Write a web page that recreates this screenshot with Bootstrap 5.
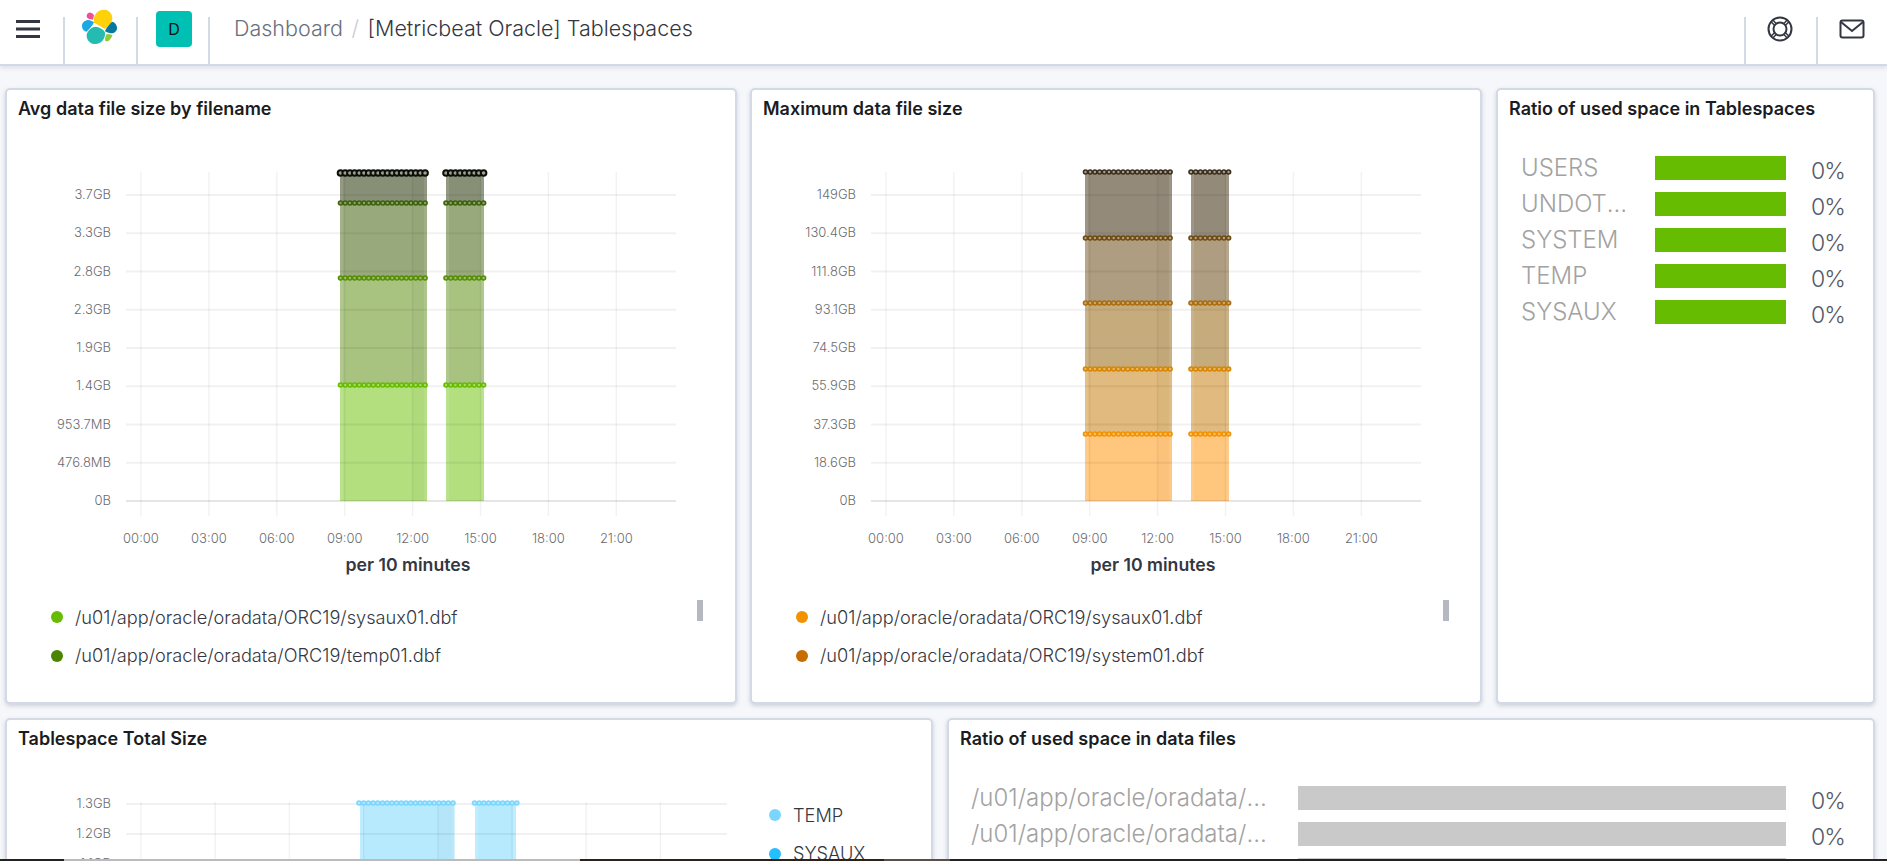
<!DOCTYPE html>
<html lang="en">

<head>
    <meta charset="UTF-8" />
    <meta name="viewport" content="width=device-width, initial-scale=1" />
    <title>[Metricbeat Oracle] Tablespaces</title>
    <link href="https://cdn.jsdelivr.net/npm/bootstrap@5.3.3/dist/css/bootstrap.min.css" rel="stylesheet">
    <style>
        html, body { height: 100%; overflow: hidden; }
        body { font-family: Inter, "Noto Sans", sans-serif; background: #f5f7fa; color: #343741; }

        .top-bar { height: 66px; background: #fff; border-bottom: 2px solid #d3dae6; box-shadow: 0 2px 4px rgba(152, 162, 179, .25); flex-wrap: nowrap; }
        .bar-cell { position: relative; height: 64px; padding-bottom: 7px; }
        .bar-cell.line-right::after, .bar-cell.line-left::before { content: ""; position: absolute; top: 17px; bottom: 0; width: 2px; background: #d3dae6; }
        .bar-cell.line-right::after { right: 0; }
        .bar-cell.line-left::before { left: 0; }
        .cell-menu { width: 65px; }
        .cell-logo { width: 73px; }
        .cell-space { width: 72px; }
        .cell-help { width: 72px; }
        .cell-mail { width: 71px; }
        .logo-mark { margin-left: 19px; }
        .space-tile { width: 36px; height: 36px; margin-left: 18px; background: #00bfb3; color: #111; border-radius: 4px; font-size: 16px; }
        .crumbs { padding-left: 24px; font-size: 21.500px; font-weight: 300; padding-bottom: 7px; --bs-breadcrumb-divider-color: #c5ccd9; --bs-breadcrumb-item-padding-x: 8.500px; }
        .crumbs .breadcrumb-item { color: #69707d; }
        .crumbs .breadcrumb-item.active { color: #343741; }

        .dash { padding: 22px 12px 0 5px; gap: 14px; }
        .row-top { display: grid; grid-template-columns: 732fr 731fr 379fr; gap: 14px; }
        .row-bottom { display: grid; grid-template-columns: 1fr 1fr; gap: 14px; }
        .panel { --bs-card-border-color: #d3dae6; --bs-card-border-width: 2px; --bs-card-border-radius: 5px; box-shadow: 0 2px 4px rgba(152, 162, 179, .45); overflow: hidden; }
        .panel-shift { margin-left: -1px; }
        .row-top .panel { height: 616px; }
        .row-bottom .panel { height: 300px; }
        .panel-head { height: 37px; line-height: 37px; padding-left: 11px; font-size: 18px; font-weight: 600; color: #1a1c21; white-space: nowrap; }
        .panel svg { display: block; flex: none; }
        .panel svg text { font-family: Inter, "Noto Sans", sans-serif; }

        .legend-box { position: relative; padding: 1px 0 0 44px; }
        .legend-line { height: 38.500px; gap: 12px; font-size: 18.200px; font-weight: 300; color: #343741; white-space: nowrap; }
        .legend-dot { width: 12px; height: 12px; border-radius: 50%; flex: none; }
        .legend-thumb { position: absolute; top: 3px; right: 32px; width: 6px; height: 21px; background: #b5b8c0; }
        .panel-shift .legend-thumb { right: 31px; }
        .side-legend { padding: 39px 0 0 1px; }

        .ratio-list { margin-top: 23px; padding-left: 23px; }
        .ratio-list.wide { padding-left: 22px; }
        .ratio-line { height: 36px; font-weight: 300; font-size: 24px; }
        .ratio-name { width: 134px; padding-right: 23px; color: #a3a2a2; line-height: 34px; margin-top: -1px; flex: none; }
        .wide .ratio-name { width: 327px; padding-right: 19px; }
        .ratio-fill { height: 24px; flex-grow: 1; }
        .ratio-pct { width: 87px; padding-left: 25px; padding-top: 6px; color: #555a66; font-size: 23px; letter-spacing: -1px; flex: none; white-space: nowrap; }

        .task-strip { height: 2px; }
    </style>
</head>

<body>
    <nav class="navbar top-bar p-0 justify-content-start">
        <div class="bar-cell line-right cell-menu d-flex align-items-center">
            <svg class="ms-3" width="24" height="18" viewBox="0 0 24 18"><path d="M0 1.500h24M0 9h24M0 16.500h24" stroke="#343741" stroke-width="3" fill="none" /></svg>
        </div>
        <div class="bar-cell line-right cell-logo d-flex align-items-center">
            <svg class="logo-mark" width="42" height="42" viewBox="42 22 126 126" overflow="visible">
                <path d="M72 52C74 36 90 26 104 27C118 28 128 40 127 54C126 66 112 78 105 85C95 78 82 72 72 66Z" fill="#fed10a" />
                <path d="M50 46C50 40 56 35 62 36C67 37 71 41 72 44C71 48 70 53 69 57C60 57 50 54 50 46Z" fill="#f04e98" />
                <path d="M36 75C36 65 46 58 55 58C62 59 68 62 72 65C68 74 58 86 50 93C42 92 36 85 36 75Z" fill="#1ba9e1" />
                <path d="M50 102C52 90 66 78 76 78C90 80 103 88 105 96C107 112 94 130 76 130C60 130 49 118 50 102Z" fill="#24bbb1" />
                <path d="M105 92C108 82 120 68 126 63C135 64 141 74 141 82C141 92 132 99 122 98C116 97 110 95 105 92Z" fill="#0779a1" />
                <path d="M105 118C105 112 107 105 110 100C116 100 122 101 127 103C125 112 118 122 111 122C107 122 105 121 105 118Z" fill="#93c83e" />
            </svg>
        </div>
        <div class="bar-cell line-right cell-space d-flex align-items-center">
            <div class="space-tile d-flex align-items-center justify-content-center">D</div>
        </div>
        <ol class="breadcrumb crumbs mb-0 flex-grow-1">
            <li class="breadcrumb-item">Dashboard</li>
            <li class="breadcrumb-item active">[Metricbeat Oracle] Tablespaces</li>
        </ol>
        <div class="bar-cell line-left cell-help d-flex align-items-center justify-content-center">
            <svg width="26" height="26" viewBox="0 0 26 26" fill="none" stroke="#343741" stroke-width="2">
                <circle cx="13" cy="13" r="11.500" />
                <circle cx="13" cy="13" r="6.500" />
                <path d="M5.500 3.800 9.200 7.500M3.800 5.500 7.500 9.200M20.500 3.800 16.800 7.500M22.200 5.500 18.500 9.200M5.500 22.200 9.200 18.500M3.800 20.500 7.500 16.800M20.500 22.200 16.800 18.500M22.200 20.500 18.500 16.800" stroke-width="1.500" />
            </svg>
        </div>
        <div class="bar-cell line-left cell-mail d-flex align-items-center justify-content-center">
            <svg width="26" height="20" viewBox="0 0 26 20" fill="none" stroke="#343741" stroke-width="2">
                <rect x="1.500" y="1.500" width="23" height="17" rx="2" />
                <path d="M2 3l11 9 11-9" />
            </svg>
        </div>
    </nav>

    <main class="dash d-flex flex-column">
        <div class="row-top">
            <div class="card panel">
                <div class="panel-head">Avg data file size by filename</div>
                <svg id="chart-avg" width="728" height="470" viewBox="7 127 728 470"></svg>
                <div class="legend-box">
                    <div class="legend-line d-flex align-items-center"><span class="legend-dot" style="background:#65bc00"></span>/u01/app/oracle/oradata/ORC19/sysaux01.dbf</div>
                    <div class="legend-line d-flex align-items-center"><span class="legend-dot" style="background:#4a8500"></span>/u01/app/oracle/oradata/ORC19/temp01.dbf</div>
                    <div class="legend-thumb"></div>
                </div>
            </div>
            <div class="card panel panel-shift">
                <div class="panel-head">Maximum data file size</div>
                <svg id="chart-max" width="728" height="470" viewBox="7 127 728 470"></svg>
                <div class="legend-box">
                    <div class="legend-line d-flex align-items-center"><span class="legend-dot" style="background:#f39200"></span>/u01/app/oracle/oradata/ORC19/sysaux01.dbf</div>
                    <div class="legend-line d-flex align-items-center"><span class="legend-dot" style="background:#c66c00"></span>/u01/app/oracle/oradata/ORC19/system01.dbf</div>
                    <div class="legend-thumb"></div>
                </div>
            </div>
            <div class="card panel">
                <div class="panel-head">Ratio of used space in Tablespaces</div>
                <div class="ratio-list" id="ratio-spaces"></div>
            </div>
        </div>
        <div class="row-bottom">
            <div class="card panel">
                <div class="panel-head">Tablespace Total Size</div>
                <div class="d-flex">
                    <svg id="chart-total" width="761" height="120" viewBox="7 757 761 120"></svg>
                    <div class="side-legend">
                        <div class="legend-line d-flex align-items-center"><span class="legend-dot" style="background:#7bd6ff"></span>TEMP</div>
                        <div class="legend-line d-flex align-items-center"><span class="legend-dot" style="background:#23bfff"></span>SYSAUX</div>
                    </div>
                </div>
            </div>
            <div class="card panel">
                <div class="panel-head">Ratio of used space in data files</div>
                <div class="ratio-list wide" id="ratio-files"></div>
            </div>
        </div>
    </main>

    <div class="task-strip d-flex position-fixed bottom-0 start-0 end-0" id="strip"></div>

    <script src="https://cdn.jsdelivr.net/npm/bootstrap@5.3.3/dist/js/bootstrap.bundle.min.js"></script>
    <script>
        const hours = ["00:00", "03:00", "06:00", "09:00", "12:00", "15:00", "18:00", "21:00"];

        function dotRow(from, to, y, stroke, fill, r, width) {
            let out = "";
            for (let x = from; x <= to; x += 4.7) {
                out += `<circle cx="${x}" cy="${y}" r="${r}" fill="${fill}" stroke="${stroke}" stroke-width="${width}"/>`;
            }
            return out;
        }

        // cfg.layers: top y of every stacked band, from the top one down
        function drawChart(id, cfg) {
            let out = "";
            cfg.bars.forEach(bar => {
                cfg.layers.forEach((layer, i) => {
                    const next = i + 1 < cfg.layers.length ? cfg.layers[i + 1].y : cfg.base;
                    out += `<rect x="${bar.x}" y="${layer.y}" width="${bar.w}" height="${next - layer.y}" fill="${layer.fill}"/>`;
                });
                if (bar.band) {
                    out += `<rect x="${bar.band}" y="${cfg.layers[0].y}" width="${bar.x + bar.w - bar.band}" height="${cfg.base - cfg.layers[0].y}" fill="rgba(0,0,0,.02)"/>`;
                }
                out += `<rect x="${bar.x}" y="${cfg.layers[0].y}" width="3" height="${cfg.base - cfg.layers[0].y}" fill="rgba(255,255,255,.1)"/>`;
                out += `<rect x="${bar.x + bar.w - 3}" y="${cfg.layers[0].y}" width="3" height="${cfg.base - cfg.layers[0].y}" fill="rgba(255,255,255,.1)"/>`;
            });
            cfg.ticks.forEach(t => {
                out += `<line x1="126" x2="${cfg.right}" y1="${t.y}" y2="${t.y}" stroke="rgba(0,0,0,${t.axis ? .1 : .055})" stroke-width="2"/>`;
                out += `<text x="111" y="${t.y + 4}" text-anchor="end" font-size="13" font-weight="300" fill="#6a6c70">${t.label}</text>`;
            });
            for (let i = 0; i < 8; i++) {
                const x = 141 + cfg.step * i;
                out += `<line x1="${x}" x2="${x}" y1="${cfg.top}" y2="${cfg.bottom}" stroke="rgba(0,0,0,.05)" stroke-width="1.500"/>`;
                if (cfg.axisLabels) {
                    out += `<text x="${x}" y="543" text-anchor="middle" font-size="13" font-weight="300" fill="#6a6c70">${hours[i]}</text>`;
                }
            }
            if (cfg.axisLabels) {
                out += `<text x="408" y="571" text-anchor="middle" font-size="17.700" font-weight="600" fill="#343741">per 10 minutes</text>`;
            }
            cfg.bars.forEach(bar => {
                cfg.layers.forEach(layer => {
                    out += dotRow(bar.dotFrom, bar.dotTo, layer.y, layer.dot, layer.dotFill, layer.r || 2, layer.width || 1.6);
                });
            });
            document.getElementById(id).innerHTML = out;
        }

        function gridTicks(labels) {
            return labels.map((label, i) => ({ label, y: 195 + 38.25 * i, axis: i === labels.length - 1 }));
        }

        drawChart("chart-avg", {
            top: 172, bottom: 516, base: 501, right: 676, step: 67.9, axisLabels: true,
            ticks: gridTicks(["3.7GB", "3.3GB", "2.8GB", "2.3GB", "1.9GB", "1.4GB", "953.7MB", "476.8MB", "0B"]),
            bars: [{ x: 340, w: 87, band: 412.500, dotFrom: 340.500, dotTo: 429 }, { x: 446, w: 38, dotFrom: 446, dotTo: 486 }],
            layers: [
                { y: 173, fill: "#878f76", dot: "#0c0f08", dotFill: "#9da093", r: 2.800, width: 2 },
                { y: 203, fill: "#98aa7b", dot: "#3d6208", dotFill: "#8ba170" },
                { y: 278, fill: "#a8c280", dot: "#568f03", dotFill: "#9dbb70" },
                { y: 385, fill: "#b3df7f", dot: "#65bc00", dotFill: "#aada66" }
            ]
        });

        // same page coordinates as the first chart, shifted by the grid
        drawChart("chart-max", {
            top: 172, bottom: 516, base: 501, right: 676, step: 67.9, axisLabels: true,
            ticks: gridTicks(["149GB", "130.4GB", "111.8GB", "93.1GB", "74.5GB", "55.9GB", "37.3GB", "18.6GB", "0B"]),
            bars: [{ x: 340, w: 87, band: 412.500, dotFrom: 340.500, dotTo: 429 }, { x: 446, w: 38, dotFrom: 446, dotTo: 486 }],
            layers: [
                { y: 172, fill: "#938a7a", dot: "#3a2e1e", dotFill: "#a89f8e" },
                { y: 238, fill: "#ae9d80", dot: "#6f4b14", dotFill: "#b39f80" },
                { y: 303, fill: "#c6ab7c", dot: "#ab6c10", dotFill: "#cba96c" },
                { y: 369, fill: "#e0ba7e", dot: "#d88600", dotFill: "#e6b76a" },
                { y: 434, fill: "#ffc67d", dot: "#f39200", dotFill: "#fdc068" }
            ]
        });

        drawChart("chart-total", {
            top: 802, bottom: 880, base: 880, right: 727, step: 74.200, axisLabels: false,
            ticks: [{ label: "1.3GB", y: 804 }, { label: "1.2GB", y: 834 }, { label: "1.1GB", y: 864 }],
            bars: [{ x: 360, w: 94.500, band: 438, dotFrom: 359, dotTo: 457 }, { x: 475, w: 41, dotFrom: 474.500, dotTo: 520 }],
            layers: [{ y: 803, fill: "#b8eafe", dot: "#7bd6ff", dotFill: "#b5e8fd" }]
        });

        function fillRatios(id, names, colour) {
            document.getElementById(id).innerHTML = names.map(name => `
                <div class="ratio-line d-flex align-items-center">
                    <div class="ratio-name text-truncate">${name}</div>
                    <div class="ratio-fill" style="background:${colour}"></div>
                    <div class="ratio-pct">0%</div>
                </div>`).join("");
        }

        fillRatios("ratio-spaces", ["USERS", "UNDOTBS1", "SYSTEM", "TEMP", "SYSAUX"], "#65bc00");
        fillRatios("ratio-files", [
            "/u01/app/oracle/oradata/ORC19/sysaux01.dbf",
            "/u01/app/oracle/oradata/ORC19/system01.dbf",
            "/u01/app/oracle/oradata/ORC19/temp01.dbf"
        ], "#c9c9c9");

        // desktop taskbar edge visible at the very bottom of the capture
        document.getElementById("strip").innerHTML = [[64, "#222"], [516, "#bbb"], [304, "#2e2118"], [66, "#5a4f48"], [937, "#222"]]
            .map(p => `<div style="width:${p[0]}px;background:${p[1]}"></div>`).join("");
    </script>
</body>

</html>
